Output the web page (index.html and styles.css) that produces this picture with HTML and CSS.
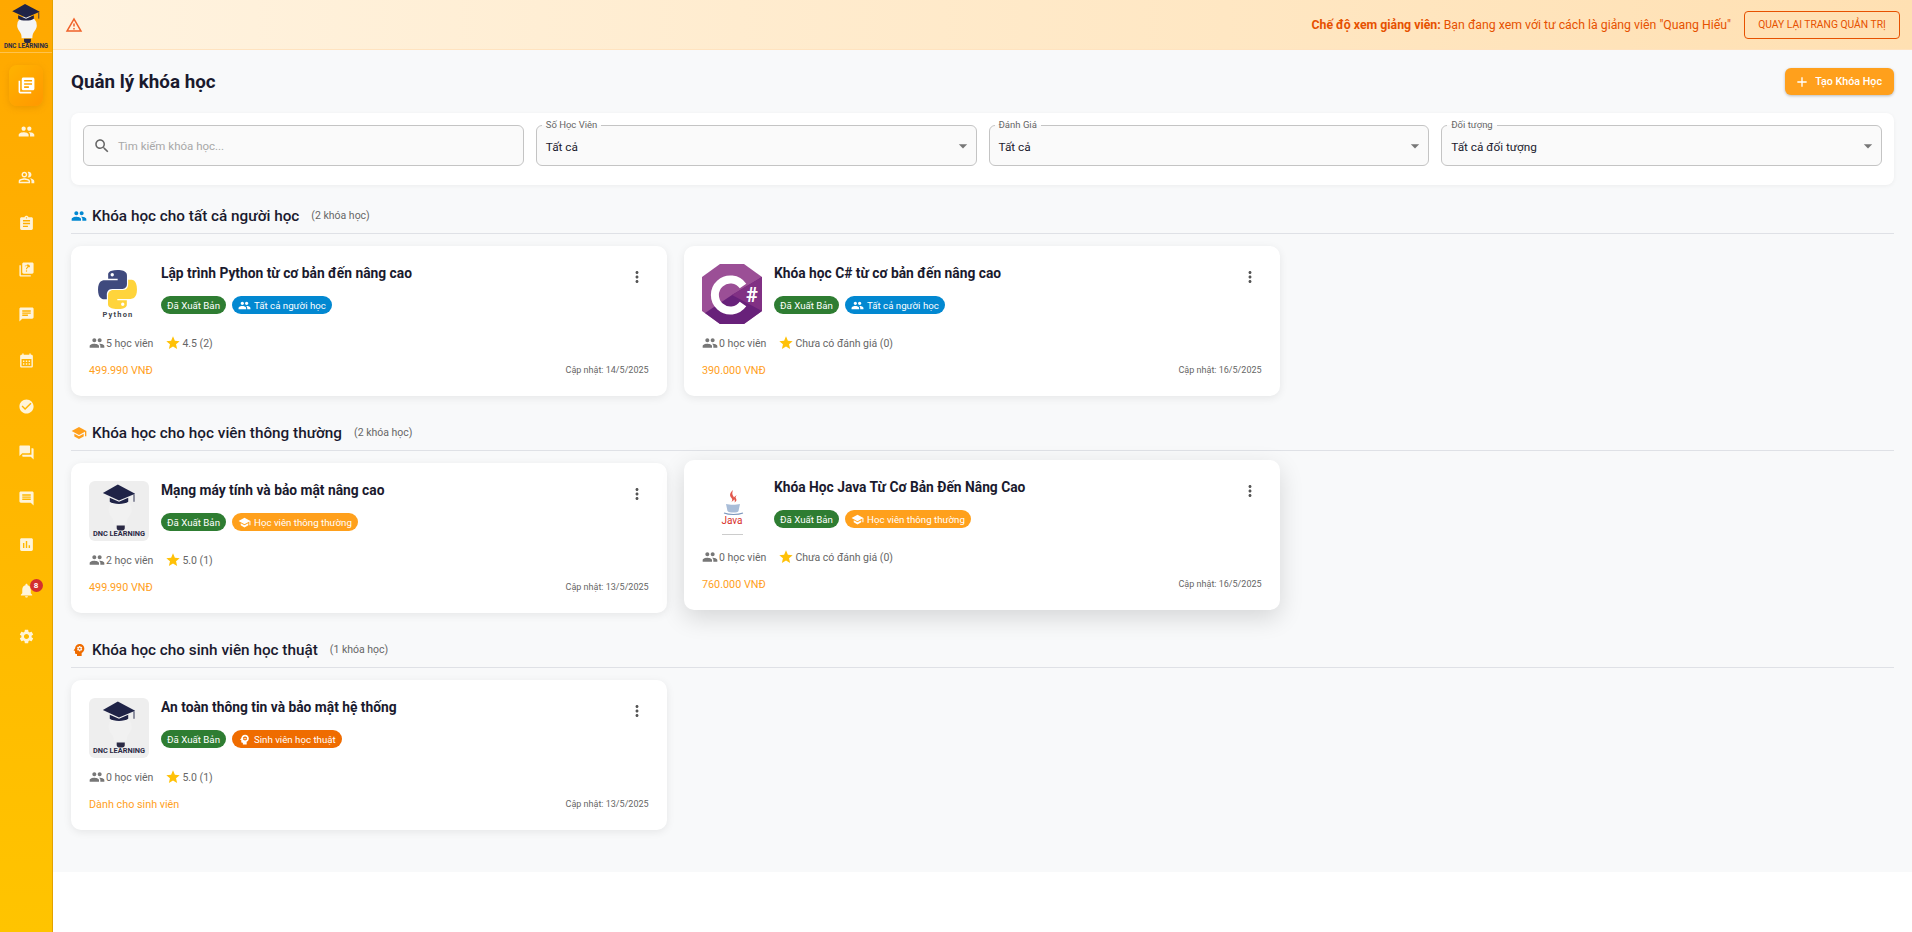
FILE: index.html
```html
<!DOCTYPE html>
<html lang="vi">
	<head>
		<meta charset="utf-8">
		<title>Quản lý khóa học</title>
		<link rel="stylesheet" href="styles.css">
	</head>
	<body>
		<svg class="sprite" xmlns="http://www.w3.org/2000/svg">
			<symbol id="i-books" viewBox="0 0 24 24"><path d="M4 6H2v14c0 1.1.9 2 2 2h14v-2H4V6zm16-4H8c-1.1 0-2 .9-2 2v12c0 1.1.9 2 2 2h12c1.1 0 2-.9 2-2V4c0-1.1-.9-2-2-2zm-1 9H9V9h10v2zm-4 4H9v-2h6v2zm4-8H9V5h10v2z"/></symbol>
			<symbol id="i-people" viewBox="0 0 24 24"><path d="M16 11c1.66 0 2.99-1.34 2.99-3S17.66 5 16 5c-1.66 0-3 1.34-3 3s1.34 3 3 3zm-8 0c1.66 0 2.99-1.34 2.99-3S9.66 5 8 5C6.34 5 5 6.34 5 8s1.34 3 3 3zm0 2c-2.33 0-7 1.17-7 3.5V19h14v-2.5c0-2.33-4.67-3.5-7-3.5zm8 0c-.29 0-.62.02-.97.05 1.16.84 1.97 1.97 1.97 3.45V19h6v-2.5c0-2.33-4.67-3.5-7-3.5z"/></symbol>
			<symbol id="i-people-alt" viewBox="0 0 24 24"><path d="M16.67 13.13C18.04 14.06 19 15.32 19 17v3h4v-3c0-2.18-3.57-3.47-6.33-3.87zM15 12c2.21 0 4-1.79 4-4s-1.79-4-4-4c-.47 0-.91.1-1.33.24C14.5 5.27 15 6.58 15 8s-.5 2.73-1.33 3.76c.42.14.86.24 1.33.24zM9 12c2.21 0 4-1.79 4-4s-1.79-4-4-4-4 1.79-4 4 1.79 4 4 4zm0-6c1.1 0 2 .9 2 2s-.9 2-2 2-2-.9-2-2 .9-2 2-2zM9 13c-2.67 0-8 1.34-8 4v3h16v-3c0-2.66-5.33-4-8-4zm6 5H3v-.99C3.2 16.29 6.3 15 9 15s5.8 1.29 6 2v1z"/></symbol>
			<symbol id="i-assignment" viewBox="0 0 24 24"><path d="M19 3h-4.18C14.4 1.84 13.3 1 12 1c-1.3 0-2.4.84-2.82 2H5c-1.1 0-2 .9-2 2v14c0 1.1.9 2 2 2h14c1.1 0 2-.9 2-2V5c0-1.1-.9-2-2-2zm-7 0c.55 0 1 .45 1 1s-.45 1-1 1-1-.45-1-1 .45-1 1-1zm2 14H7v-2h7v2zm3-4H7v-2h10v2zm0-4H7V7h10v2z"/></symbol>
			<symbol id="i-quiz" viewBox="0 0 24 24"><path d="M4 6H2v14c0 1.1.9 2 2 2h14v-2H4V6z"/><path d="M20 2H8c-1.1 0-2 .9-2 2v12c0 1.1.9 2 2 2h12c1.1 0 2-.9 2-2V4c0-1.1-.9-2-2-2zm-7.99 13c-.59 0-1.05-.47-1.05-1.05 0-.59.47-1.04 1.05-1.04.59 0 1.04.45 1.04 1.04-.01.58-.45 1.05-1.04 1.05zm2.5-6.17c-.63.93-1.23 1.21-1.56 1.81-.13.24-.18.4-.18 1.18h-1.52c0-.41-.06-1.08.26-1.65.41-.73 1.18-1.16 1.63-1.8.48-.68.21-1.94-1.14-1.94-.88 0-1.32.67-1.5 1.23l-1.37-.57C11.51 5.96 12.52 5 13.99 5c1.23 0 2.08.56 2.51 1.26.37.61.58 1.73.01 2.57z"/></symbol>
			<symbol id="i-chat" viewBox="0 0 24 24"><path d="M20 2H4c-1.1 0-1.99.9-1.99 2L2 22l4-4h14c1.1 0 2-.9 2-2V4c0-1.1-.9-2-2-2zM6 9h12v2H6V9zm8 5H6v-2h8v2zm4-6H6V6h12v2z"/></symbol>
			<symbol id="i-calendar" viewBox="0 0 24 24"><path d="M19 4h-1V2h-2v2H8V2H6v2H5c-1.11 0-1.99.9-1.99 2L3 20c0 1.1.89 2 2 2h14c1.1 0 2-.9 2-2V6c0-1.1-.9-2-2-2zm0 16H5V10h14v10zM9 14H7v-2h2v2zm4 0h-2v-2h2v2zm4 0h-2v-2h2v2zm-8 4H7v-2h2v2zm4 0h-2v-2h2v2zm4 0h-2v-2h2v2z"/></symbol>
			<symbol id="i-check" viewBox="0 0 24 24"><path d="M12 2C6.48 2 2 6.48 2 12s4.48 10 10 10 10-4.48 10-10S17.52 2 12 2zm-2 15-5-5 1.41-1.41L10 14.17l7.59-7.59L19 8l-9 9z"/></symbol>
			<symbol id="i-forum" viewBox="0 0 24 24"><path d="M21 6h-2v9H6v2c0 .55.45 1 1 1h11l4 4V7c0-.55-.45-1-1-1zm-4 6V3c0-.55-.45-1-1-1H3c-.55 0-1 .45-1 1v14l4-4h10c.55 0 1-.45 1-1z"/></symbol>
			<symbol id="i-comment" viewBox="0 0 24 24"><path d="M20 2H4c-1.1 0-2 .9-2 2v12c0 1.1.9 2 2 2h14l4 4V4c0-1.1-.9-2-2-2zm-2 12H6v-2h12v2zm0-3H6V9h12v2zm0-3H6V6h12v2z"/></symbol>
			<symbol id="i-chart" viewBox="0 0 24 24"><path d="M19 3H5c-1.1 0-2 .9-2 2v14c0 1.1.9 2 2 2h14c1.1 0 2-.9 2-2V5c0-1.1-.9-2-2-2zM9 17H7v-7h2v7zm4 0h-2V7h2v10zm4 0h-2v-4h2v4z"/></symbol>
			<symbol id="i-bell" viewBox="0 0 24 24"><path d="M12 22c1.1 0 2-.9 2-2h-4c0 1.1.89 2 2 2zm6-6v-5c0-3.07-1.64-5.64-4.5-6.32V4c0-.83-.67-1.5-1.5-1.5s-1.5.67-1.5 1.5v.68C7.63 5.36 6 7.92 6 11v5l-2 2v1h16v-1l-2-2z"/></symbol>
			<symbol id="i-settings" viewBox="0 0 24 24"><path d="M19.14 12.94c.04-.3.06-.61.06-.94 0-.32-.02-.64-.07-.94l2.03-1.58c.18-.14.23-.41.12-.61l-1.92-3.32c-.12-.22-.37-.29-.59-.22l-2.39.96c-.5-.38-1.03-.7-1.62-.94l-.36-2.54c-.04-.24-.24-.41-.48-.41h-3.84c-.24 0-.43.17-.47.41l-.36 2.54c-.59.24-1.13.57-1.62.94l-2.39-.96c-.22-.08-.47 0-.59.22L2.74 8.87c-.12.21-.08.47.12.61l2.03 1.58c-.05.3-.09.63-.09.94s.02.64.07.94l-2.03 1.58c-.18.14-.23.41-.12.61l1.92 3.32c.12.22.37.29.59.22l2.39-.96c.5.38 1.03.7 1.62.94l.36 2.54c.05.24.24.41.48.41h3.84c.24 0 .44-.17.47-.41l.36-2.54c.59-.24 1.13-.56 1.62-.94l2.39.96c.22.08.47 0 .59-.22l1.92-3.32c.12-.22.07-.47-.12-.61l-2.01-1.58zM12 15.6c-1.98 0-3.6-1.62-3.6-3.6s1.62-3.6 3.6-3.6 3.6 1.62 3.6 3.6-1.62 3.6-3.6 3.6z"/></symbol>
			<symbol id="i-school" viewBox="0 0 24 24"><path d="M5 13.18v4L12 21l7-3.82v-4L12 17l-7-3.82zM12 3 1 9l11 6 9-4.91V17h2V9L12 3z"/></symbol>
			<symbol id="i-psychology" viewBox="0 0 24 24"><path d="M13 8.57c-.79 0-1.43.64-1.43 1.43s.64 1.43 1.43 1.43 1.43-.64 1.43-1.43-.64-1.43-1.43-1.43z"/><path d="M13 3C9.25 3 6.2 5.94 6.02 9.64L4.1 12.2c-.25.33-.01.8.4.8H6v3c0 1.1.9 2 2 2h1v3h7v-4.68c2.36-1.12 4-3.53 4-6.32 0-3.87-3.13-7-7-7zm3 7c0 .13-.01.26-.02.39l.83.66c.08.06.1.16.05.25l-.8 1.39c-.05.09-.16.12-.24.09l-.99-.4c-.21.16-.43.29-.67.39L14 13.83c-.01.1-.1.17-.2.17h-1.6c-.1 0-.18-.07-.2-.17l-.15-1.06c-.25-.1-.47-.23-.68-.39l-.99.4c-.09.03-.2 0-.25-.09l-.8-1.39c-.05-.08-.03-.19.05-.25l.84-.66c-.01-.13-.02-.26-.02-.39s.02-.27.04-.39l-.85-.66c-.08-.06-.1-.16-.05-.26l.8-1.38c.05-.09.15-.12.24-.09l1 .4c.2-.15.43-.29.67-.39L12 6.17c.02-.1.1-.17.2-.17h1.6c.1 0 .18.07.2.17l.15 1.06c.24.1.46.23.67.39l1-.4c.09-.03.2 0 .24.09l.8 1.38c.05.09.03.2-.05.26l-.85.66c.03.12.04.25.04.39z"/></symbol>
			<symbol id="i-star" viewBox="0 0 24 24"><path d="M12 17.27 18.18 21l-1.64-7.03L22 9.24l-7.19-.61L12 2 9.19 8.63 2 9.24l5.46 4.73L5.82 21z"/></symbol>
			<symbol id="i-more" viewBox="0 0 24 24"><path d="M12 8c1.1 0 2-.9 2-2s-.9-2-2-2-2 .9-2 2 .9 2 2 2zm0 2c-1.1 0-2 .9-2 2s.9 2 2 2 2-.9 2-2-.9-2-2-2zm0 6c-1.1 0-2 .9-2 2s.9 2 2 2 2-.9 2-2-.9-2-2-2z"/></symbol>
			<symbol id="i-search" viewBox="0 0 24 24"><path d="M15.5 14h-.79l-.28-.27C15.41 12.59 16 11.11 16 9.5 16 5.91 13.09 3 9.5 3S3 5.91 3 9.5 5.91 16 9.5 16c1.61 0 3.09-.59 4.23-1.57l.27.28v.79l5 4.99L20.49 19l-4.99-5zm-6 0C7.01 14 5 11.99 5 9.5S7.01 5 9.5 5 14 7.01 14 9.5 11.99 14 9.5 14z"/></symbol>
			<symbol id="i-warning" viewBox="0 0 24 24"><path d="M12 5.99 19.53 19H4.47L12 5.99M12 2 1 21h22L12 2zm1 14h-2v2h2v-2zm0-6h-2v4h2v-4z"/></symbol>
			<symbol id="i-add" viewBox="0 0 24 24"><path d="M19 13h-6v6h-2v-6H5v-2h6V5h2v6h6v2z"/></symbol>
			<symbol id="i-arrow" viewBox="0 0 24 24"><path d="M7 10l5 5 5-5z"/></symbol>
			<symbol id="logo-dnc" viewBox="0 0 52 52">
				<path d="M27 15a10 10 0 0 1 10 10c0 4-3 6-4 9-.4 1.300-.5 3-.5 4h-11c0-1-.1-2.700-.5-4-1-3-4-5-4-9a10 10 0 0 1 10-10z" fill="currentColor"/>
				<path d="M24 38.500h7v2.500a3.500 2 0 0 1-7 0z" fill="#2b2a45"/>
				<path d="M25 3 12 10.500l14 6.500 14-6z" fill="#1f2347"/>
				<path d="M18 14.500v3.500c3 2.500 13 2.500 16 0v-3.500l-8 3.500z" fill="#1f2347"/>
				<path d="M39 11.500v6.500" stroke="#1f2347" stroke-width=".8"/>
				<text x="26" y="48" class="logo-text" text-anchor="middle">DNC LEARNING</text>
			</symbol>
		</svg>

		<div class="app">
			<aside class="sidebar">
				<div class="brand">
					<svg class="brand-logo"><use href="#logo-dnc"/></svg>
				</div>
				<nav class="nav">
					<a class="nav-item active"><svg class="nav-icon"><use href="#i-books"/></svg></a>
					<a class="nav-item"><svg class="nav-icon"><use href="#i-people"/></svg></a>
					<a class="nav-item"><svg class="nav-icon"><use href="#i-people-alt"/></svg></a>
					<a class="nav-item"><svg class="nav-icon"><use href="#i-assignment"/></svg></a>
					<a class="nav-item"><svg class="nav-icon"><use href="#i-quiz"/></svg></a>
					<a class="nav-item"><svg class="nav-icon"><use href="#i-chat"/></svg></a>
					<a class="nav-item"><svg class="nav-icon"><use href="#i-calendar"/></svg></a>
					<a class="nav-item"><svg class="nav-icon"><use href="#i-check"/></svg></a>
					<a class="nav-item"><svg class="nav-icon"><use href="#i-forum"/></svg></a>
					<a class="nav-item"><svg class="nav-icon"><use href="#i-comment"/></svg></a>
					<a class="nav-item"><svg class="nav-icon"><use href="#i-chart"/></svg></a>
					<a class="nav-item">
						<span class="bell">
							<svg class="nav-icon"><use href="#i-bell"/></svg>
							<span class="badge">8</span>
						</span>
					</a>
					<a class="nav-item"><svg class="nav-icon"><use href="#i-settings"/></svg></a>
				</nav>
			</aside>

			<main class="main">
				<div class="banner">
					<svg class="banner-icon"><use href="#i-warning"/></svg>
					<p class="banner-text"><b>Chế độ xem giảng viên:</b> Bạn đang xem với tư cách là giảng viên "Quang Hiếu"</p>
					<button class="banner-btn">QUAY LẠI TRANG QUẢN TRỊ</button>
				</div>

				<div class="content">
					<div class="page-head">
						<h1>Quản lý khóa học</h1>
						<button class="btn-create"><svg class="btn-icon"><use href="#i-add"/></svg>Tạo Khóa Học</button>
					</div>

					<div class="filters">
						<div class="field">
							<svg class="search-icon"><use href="#i-search"/></svg>
							<span class="placeholder">Tìm kiếm khóa học...</span>
						</div>
						<div class="field">
							<label class="field-label">Số Học Viên</label>
							<span class="field-value">Tất cả</span>
							<svg class="field-arrow"><use href="#i-arrow"/></svg>
						</div>
						<div class="field">
							<label class="field-label">Đánh Giá</label>
							<span class="field-value">Tất cả</span>
							<svg class="field-arrow"><use href="#i-arrow"/></svg>
						</div>
						<div class="field">
							<label class="field-label">Đối tượng</label>
							<span class="field-value">Tất cả đối tượng</span>
							<svg class="field-arrow"><use href="#i-arrow"/></svg>
						</div>
					</div>

					<section class="section">
						<div class="section-head">
							<svg class="section-icon blue"><use href="#i-people"/></svg>
							<h2>Khóa học cho tất cả người học</h2>
							<span class="section-count">(2 khóa học)</span>
						</div>
						<div class="grid">
							<article class="card">
								<div class="card-top">
									<svg class="thumb" viewBox="0 0 60 60">
										<g transform="translate(9 6) scale(.355)">
											<path fill="#3f4a7e" d="M54.900 0C26.800 0 28.600 12.200 28.600 12.200v12.600h26.800v3.800H17.900S0 26.600 0 54.900s15.600 27.300 15.600 27.300h9.300V69.100s-.5-15.600 15.400-15.600h26.400s14.900.2 14.900-14.400V14.900S84 0 54.900 0zM40.100 8.500a4.800 4.800 0 1 1 0 9.600 4.800 4.800 0 0 1 0-9.600z"/>
											<path fill="#ffd43b" transform="rotate(180 54.900 55)" d="M54.900 0C26.800 0 28.600 12.200 28.600 12.200v12.600h26.800v3.800H17.900S0 26.600 0 54.900s15.600 27.300 15.600 27.300h9.300V69.100s-.5-15.600 15.400-15.600h26.400s14.900.2 14.900-14.400V14.900S84 0 54.900 0zM40.100 8.500a4.800 4.800 0 1 1 0 9.600 4.800 4.800 0 0 1 0-9.600z"/>
										</g>
										<text x="29" y="53" class="python-text" text-anchor="middle">Python</text>
									</svg>
									<div class="card-info">
										<h3>Lập trình Python từ cơ bản đến nâng cao</h3>
										<div class="chips">
											<span class="chip green">Đã Xuất Bản</span>
											<span class="chip blue"><svg class="chip-icon"><use href="#i-people"/></svg>Tất cả người học</span>
										</div>
									</div>
									<button class="more"><svg class="more-icon"><use href="#i-more"/></svg></button>
								</div>
								<div class="stats">
									<span class="stat"><svg class="stat-icon"><use href="#i-people"/></svg>5 học viên</span>
									<span class="stat"><svg class="stat-icon star"><use href="#i-star"/></svg>4.5 (2)</span>
								</div>
								<div class="card-foot">
									<span class="price">499.990 VNĐ</span>
									<span class="updated">Cập nhật: 14/5/2025</span>
								</div>
							</article>

							<article class="card">
								<div class="card-top">
									<svg class="thumb" viewBox="0 0 60 60">
										<polygon points="18,0 42,0 60,13 60,47 42,60 18,60 0,47 0,13" fill="#9b4f96"/>
										<polygon points="60,13 60,47 42,60 18,60 3,49 30,31" fill="#68217a"/>
										<polygon points="30,31 60,13 60,47" fill="#813084"/>
										<path d="M41 40a15.500 15.500 0 1 1 0-18" fill="none" stroke="#fff" stroke-width="8"/>
										<text x="50" y="38" class="csharp-text" text-anchor="middle">#</text>
									</svg>
									<div class="card-info">
										<h3>Khóa học C# từ cơ bản đến nâng cao</h3>
										<div class="chips">
											<span class="chip green">Đã Xuất Bản</span>
											<span class="chip blue"><svg class="chip-icon"><use href="#i-people"/></svg>Tất cả người học</span>
										</div>
									</div>
									<button class="more"><svg class="more-icon"><use href="#i-more"/></svg></button>
								</div>
								<div class="stats">
									<span class="stat"><svg class="stat-icon"><use href="#i-people"/></svg>0 học viên</span>
									<span class="stat"><svg class="stat-icon star"><use href="#i-star"/></svg>Chưa có đánh giá (0)</span>
								</div>
								<div class="card-foot">
									<span class="price">390.000 VNĐ</span>
									<span class="updated">Cập nhật: 16/5/2025</span>
								</div>
							</article>
						</div>
					</section>

					<section class="section">
						<div class="section-head">
							<svg class="section-icon orange"><use href="#i-school"/></svg>
							<h2>Khóa học cho học viên thông thường</h2>
							<span class="section-count">(2 khóa học)</span>
						</div>
						<div class="grid">
							<article class="card">
								<div class="card-top">
									<svg class="thumb thumb-dnc"><use href="#logo-dnc"/></svg>
									<div class="card-info">
										<h3>Mạng máy tính và bảo mật nâng cao</h3>
										<div class="chips">
											<span class="chip green">Đã Xuất Bản</span>
											<span class="chip orange"><svg class="chip-icon"><use href="#i-school"/></svg>Học viên thông thường</span>
										</div>
									</div>
									<button class="more"><svg class="more-icon"><use href="#i-more"/></svg></button>
								</div>
								<div class="stats">
									<span class="stat"><svg class="stat-icon"><use href="#i-people"/></svg>2 học viên</span>
									<span class="stat"><svg class="stat-icon star"><use href="#i-star"/></svg>5.0 (1)</span>
								</div>
								<div class="card-foot">
									<span class="price">499.990 VNĐ</span>
									<span class="updated">Cập nhật: 13/5/2025</span>
								</div>
							</article>

							<article class="card raised">
								<div class="card-top">
									<svg class="thumb" viewBox="0 0 60 60">
										<path d="M31 12c-3 3-4 5-1.500 8 1.200 1.500 1 3-.5 4 3-1 4-3 2.500-5.500-1.500-2.300-1.500-3.500-.5-6.500zM35 17c-3 1.500-4 3-2.500 5 .8 1.200.3 2-.5 2.500 2.500-.7 3-2.500 2-4-.7-1-.5-2 1-3.500z" fill="#e2574c"/>
										<path d="M24 26c4 1 10 1 14 0l-1.500 7c-.5 2-9.500 2-11 0z" fill="#a9bdd8"/>
										<path d="M22 35c5 2 14 2 19 0" fill="none" stroke="#7d97bd" stroke-width="1.200"/>
										<text x="30" y="46" class="java-text" text-anchor="middle">Java</text>
										<rect x="20" y="56" width="21" height="1" fill="#ccc"/>
									</svg>
									<div class="card-info">
										<h3>Khóa Học Java Từ Cơ Bản Đến Nâng Cao</h3>
										<div class="chips">
											<span class="chip green">Đã Xuất Bản</span>
											<span class="chip orange"><svg class="chip-icon"><use href="#i-school"/></svg>Học viên thông thường</span>
										</div>
									</div>
									<button class="more"><svg class="more-icon"><use href="#i-more"/></svg></button>
								</div>
								<div class="stats">
									<span class="stat"><svg class="stat-icon"><use href="#i-people"/></svg>0 học viên</span>
									<span class="stat"><svg class="stat-icon star"><use href="#i-star"/></svg>Chưa có đánh giá (0)</span>
								</div>
								<div class="card-foot">
									<span class="price">760.000 VNĐ</span>
									<span class="updated">Cập nhật: 16/5/2025</span>
								</div>
							</article>
						</div>
					</section>

					<section class="section">
						<div class="section-head">
							<svg class="section-icon deep"><use href="#i-psychology"/></svg>
							<h2>Khóa học cho sinh viên học thuật</h2>
							<span class="section-count">(1 khóa học)</span>
						</div>
						<div class="grid">
							<article class="card">
								<div class="card-top">
									<svg class="thumb thumb-dnc"><use href="#logo-dnc"/></svg>
									<div class="card-info">
										<h3>An toàn thông tin và bảo mật hệ thống</h3>
										<div class="chips">
											<span class="chip green">Đã Xuất Bản</span>
											<span class="chip deep"><svg class="chip-icon"><use href="#i-psychology"/></svg>Sinh viên học thuật</span>
										</div>
									</div>
									<button class="more"><svg class="more-icon"><use href="#i-more"/></svg></button>
								</div>
								<div class="stats">
									<span class="stat"><svg class="stat-icon"><use href="#i-people"/></svg>0 học viên</span>
									<span class="stat"><svg class="stat-icon star"><use href="#i-star"/></svg>5.0 (1)</span>
								</div>
								<div class="card-foot">
									<span class="price">Dành cho sinh viên</span>
									<span class="updated">Cập nhật: 13/5/2025</span>
								</div>
							</article>
						</div>
					</section>
				</div>
			</main>
		</div>
	</body>
</html>
```

FILE: styles.css
```css
*{
	margin: 0;
	padding: 0;
	box-sizing: border-box;
}
body{
	font-family: Roboto, "Liberation Sans", sans-serif;
	color: #1a1a2e;
	background: #fff;
	overflow: hidden;
}
.sprite{
	display: none;
}
.app{
	display: flex;
	height: 100vh;
}

/* sidebar */
.sidebar{
	width: 53px;
	flex-shrink: 0;
	background: linear-gradient(180deg, #ffa800 0%, #ffc400 100%);
	border-right: 1px solid #e2a200;
}
.brand{
	height: 65px;
	padding-top: 1px;
}
.brand-logo{
	display: block;
	width: 52px;
	height: 52px;
	color: #f4f4f4;
	border-bottom: 1px solid rgba(255,255,255,.3);
}
.logo-text{
	font-size: 6.400px;
	font-weight: 700;
	fill: #2b2a45;
	font-family: Roboto, sans-serif;
}
.nav{
	display: flex;
	flex-direction: column;
	align-items: center;
	gap: 4.900px;
}
.nav-item{
	width: 34px;
	height: 41px;
	display: flex;
	align-items: center;
	justify-content: center;
	border-radius: 8px;
}
.nav-item.active{
	background: linear-gradient(135deg, #ffb300, #ff9800);
	box-shadow: 0 2px 6px rgba(200,120,0,.35);
}
.nav-icon{
	display: block;
	width: 17px;
	height: 17px;
	fill: rgba(255,255,255,.85);
}
.active .nav-icon{
	width: 19px;
	height: 19px;
	fill: #fff;
}
.bell{
	position: relative;
	display: block;
}
.badge{
	position: absolute;
	top: -3px;
	right: -8px;
	width: 13px;
	height: 13px;
	border-radius: 50%;
	background: #d32f2f;
	color: #fff;
	font-size: 8px;
	font-weight: 700;
	line-height: 13px;
	text-align: center;
}

/* banner */
.main{
	flex: 1;
	min-width: 0;
	background: #fff;
}
.banner{
	height: 50px;
	display: flex;
	align-items: center;
	padding: 0 12px;
	background: linear-gradient(90deg, #fff3e0, #ffe0b2);
	border-bottom: 1px solid #ffe3c0;
}
.banner-icon{
	width: 18px;
	height: 18px;
	fill: #f0622a;
}
.banner-text{
	flex: 1;
	text-align: right;
	font-size: 12.300px;
	color: #e65100;
	margin-right: 13px;
}
.banner-btn{
	width: 156px;
	height: 28px;
	font-family: inherit;
	font-size: 10.300px;
	color: #e65100;
	background: transparent;
	border: 1px solid #e65100;
	border-radius: 4px;
}

/* content */
.content{
	padding: 18px 18px 42px;
	background: #f8f9fa;
}
.page-head{
	display: flex;
	align-items: center;
	justify-content: space-between;
	height: 27px;
}
h1{
	font-size: 18.800px;
	font-weight: 700;
	line-height: 27px;
	padding-top: 2px;
}
.btn-create{
	display: flex;
	align-items: center;
	height: 27px;
	padding: 0 12px 0 9px;
	gap: 5px;
	font-family: inherit;
	font-size: 10.700px;
	font-weight: 500;
	color: #fff;
	background: #ffa01c;
	border: none;
	border-radius: 6px;
	box-shadow: 0 1px 3px rgba(0,0,0,.25);
}
.btn-icon{
	width: 16px;
	height: 16px;
	fill: #fff;
}
.filters{
	display: grid;
	grid-template-columns: repeat(4, 1fr);
	gap: 12px;
	margin-top: 18px;
	padding: 12px 12px 19px;
	background: #fff;
	border-radius: 8px;
	box-shadow: 0 1px 4px rgba(0,0,0,.05);
}
.field{
	position: relative;
	height: 41px;
	display: flex;
	align-items: center;
	padding: 0 9px;
	background: #fafafa;
	border: 1px solid #c4c4c4;
	border-radius: 6px;
}
.search-icon{
	width: 18px;
	height: 18px;
	fill: #666;
	margin-right: 7px;
}
.placeholder{
	font-size: 11.500px;
	color: #a8a8a8;
}
.field-label{
	position: absolute;
	top: -7px;
	left: 5px;
	padding: 0 4px;
	font-size: 9.500px;
	line-height: 11px;
	color: #666;
	background: linear-gradient(180deg, #fff 55%, #fafafa 55%);
}
.field-value{
	flex: 1;
	padding-top: 2px;
	font-size: 11.800px;
}
.field-arrow{
	width: 20px;
	height: 20px;
	fill: #777;
	margin-right: -6px;
}

/* sections */
.section{
	margin-top: 25px;
}
.filters + .section{
	margin-top: 19px;
}
.section-head{
	display: flex;
	align-items: center;
	height: 30px;
	padding-bottom: 6px;
	border-bottom: 1px solid #dfe1e6;
}
.section-icon{
	width: 16px;
	height: 16px;
	margin-right: 5px;
}
.section-icon.blue{
	fill: #0288d1;
}
.section-icon.orange{
	fill: #ffa01c;
}
.section-icon.deep{
	fill: #ef6c00;
}
h2{
	font-size: 15.300px;
	font-weight: 500;
	line-height: 24px;
}
.section-count{
	margin-left: 12px;
	font-size: 10.500px;
	color: #666;
}
.grid{
	display: grid;
	grid-template-columns: repeat(3, 595.6px);
	gap: 17.400px;
	margin-top: 12px;
}

/* cards */
.card{
	height: 150px;
	padding: 18px 18px 17px;
	background: #fff;
	border-radius: 10px;
	box-shadow: 0 2px 8px rgba(0,0,0,.08);
}
.card.raised{
	transform: translateY(-3px);
	box-shadow: 0 8px 24px rgba(0,0,0,.14);
}
.card-top{
	display: flex;
	height: 60px;
}
.thumb{
	width: 60px;
	height: 60px;
	flex-shrink: 0;
	margin-right: 12px;
}
.thumb-dnc{
	color: #f1f1f1;
	background: #eee;
	border-radius: 6px;
}
.python-text{
	font-size: 7.500px;
	font-weight: 700;
	letter-spacing: 1.200px;
	fill: #44464f;
	font-family: Roboto, sans-serif;
}
.csharp-text{
	font-size: 20px;
	font-weight: 700;
	fill: #fff;
	font-family: Roboto, sans-serif;
}
.java-text{
	font-size: 10px;
	font-weight: 400;
	fill: #d8312a;
	font-family: Roboto, sans-serif;
}
.card-info{
	flex: 1;
}
h3{
	font-size: 13.800px;
	font-weight: 700;
	line-height: 20px;
	margin-top: -1px;
}
.chips{
	display: flex;
	gap: 6px;
	margin-top: 13px;
}
.chip{
	display: flex;
	align-items: center;
	height: 18px;
	padding: 0 6px;
	gap: 3px;
	font-size: 9.700px;
	color: #fff;
	border-radius: 9px;
}
.chip.green{
	background: #2e7d32;
}
.chip.blue{
	background: #0288d1;
}
.chip.orange{
	background: #ffa01c;
}
.chip.deep{
	background: #ef6c00;
}
.chip-icon{
	width: 13px;
	height: 13px;
	fill: #fff;
}
.more{
	width: 24px;
	height: 24px;
	display: flex;
	align-items: center;
	justify-content: center;
	background: none;
	border: none;
	margin-top: 1px;
}
.more-icon{
	width: 18px;
	height: 18px;
	fill: #555;
}
.stats{
	display: flex;
	gap: 12px;
	height: 18px;
	margin-top: 10px;
}
.stat{
	display: flex;
	align-items: center;
	gap: 1px;
	font-size: 10.500px;
	color: #666;
}
.stat-icon{
	width: 16px;
	height: 16px;
	fill: #777;
}
.stat-icon.star{
	fill: #ffc107;
}
.card-foot{
	display: flex;
	align-items: center;
	justify-content: space-between;
	height: 18px;
	margin-top: 9px;
}
.price{
	font-size: 10.800px;
	color: #ffa01c;
}
.updated{
	font-size: 9px;
	color: #666;
}
```
